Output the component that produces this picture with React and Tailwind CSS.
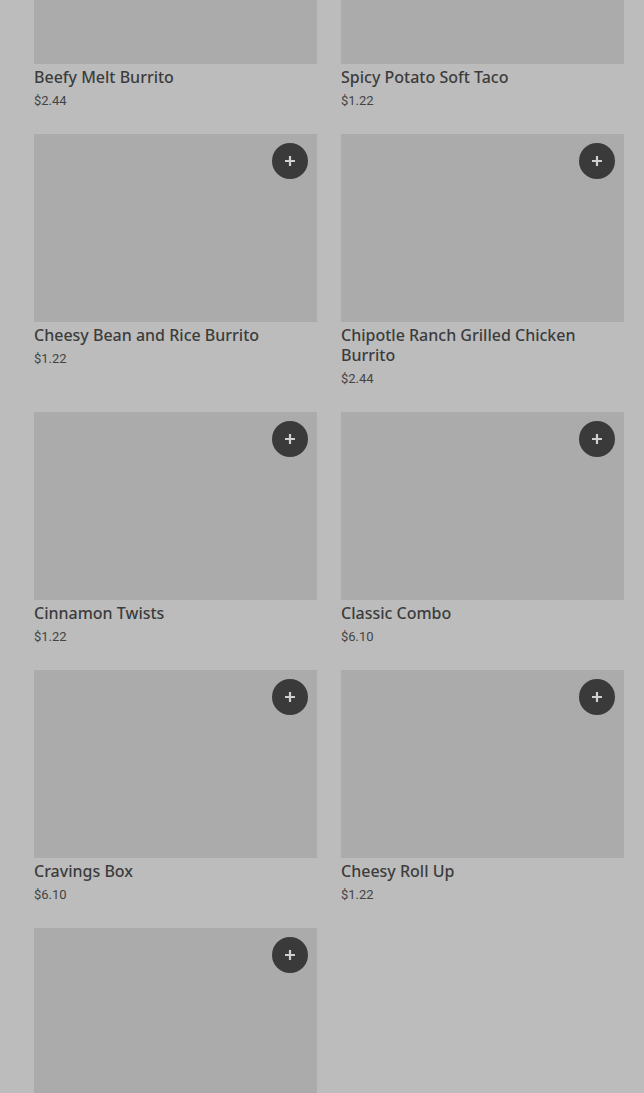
import React from 'react';

const items = [
  { name: 'Beefy Melt Burrito', price: '$2.44' },
  { name: 'Spicy Potato Soft Taco', price: '$1.22' },
  { name: 'Cheesy Bean and Rice Burrito', price: '$1.22' },
  { name: 'Chipotle Ranch Grilled Chicken Burrito', price: '$2.44' },
  { name: 'Cinnamon Twists', price: '$1.22' },
  { name: 'Classic Combo', price: '$6.10' },
  { name: 'Cravings Box', price: '$6.10' },
  { name: 'Cheesy Roll Up', price: '$1.22' },
  { name: '', price: '' },
];

const PlusButton = () => (
  <button className="absolute top-[9px] right-[9px] w-9 h-9 rounded-full bg-[#3a3a3a] flex items-center justify-center">
    <svg width="14" height="14" viewBox="0 0 14 14" fill="none">
      <path d="M7 2v10M2 7h10" stroke="#cfcfcf" strokeWidth="2.2" />
    </svg>
  </button>
);

const Card = ({ item }) => (
  <div className="flex flex-col">
    <div className="relative h-[188px] bg-[#ababab]">
      <PlusButton />
    </div>
    {item.name && (
      <>
        <div
          className="mt-[3px] text-[16px] leading-[20px] font-medium text-[#3c3c3c]"
          style={{ fontFamily: '"Noto Sans", Roboto, sans-serif' }}
        >
          {item.name}
        </div>
        <div className="mt-[4px] text-[13px] leading-[20px] text-[#444]">{item.price}</div>
      </>
    )}
  </div>
);

export default function App() {
  return (
    <div
      className="h-[1093px] overflow-hidden bg-[#bcbcbc]"
      style={{ fontFamily: 'Roboto, "Noto Sans", sans-serif' }}
    >
      <div className="mt-[-124px] pl-[34px] pr-[20px] grid grid-cols-2 gap-x-6 gap-y-[23px]">
        {items.map((item, i) => (
          <Card key={i} item={item} />
        ))}
      </div>
    </div>
  );
}
